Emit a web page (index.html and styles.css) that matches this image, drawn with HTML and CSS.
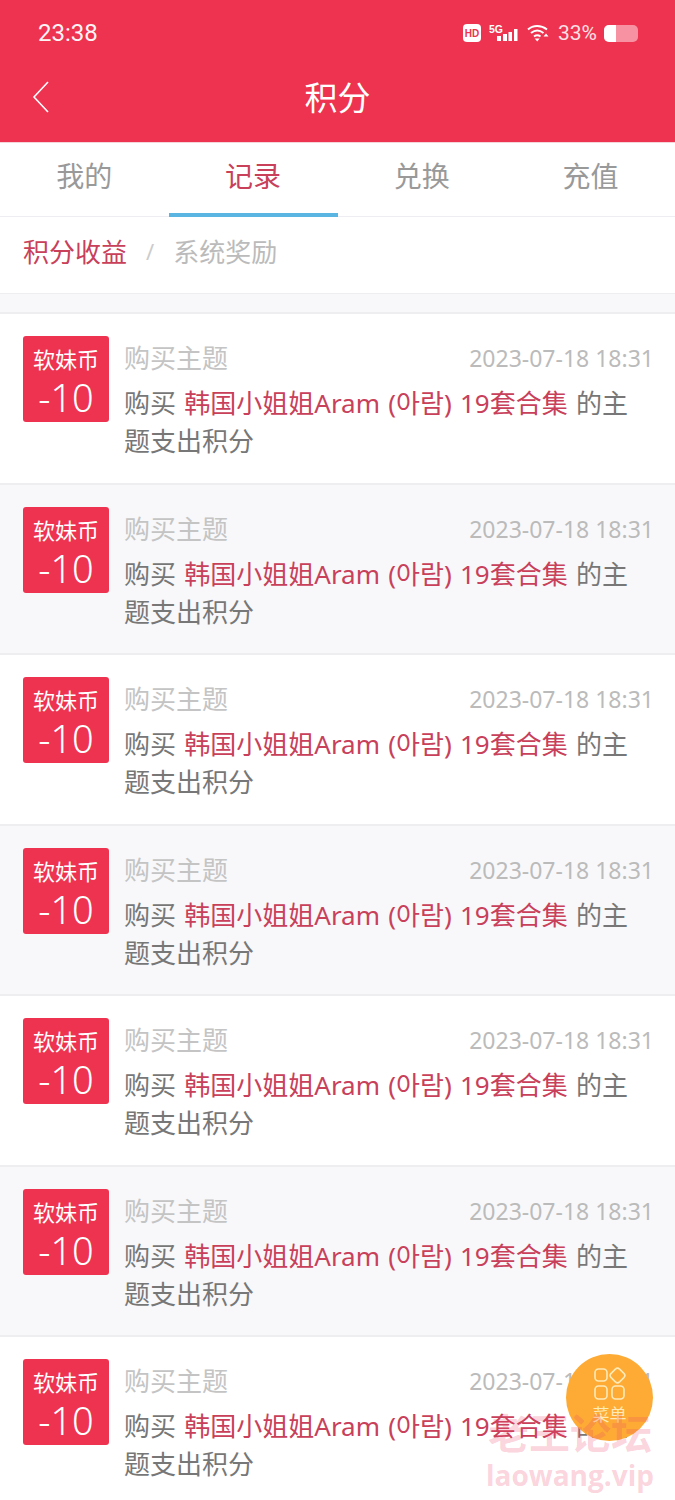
FILE: index.html
```html
<!DOCTYPE html>
<html lang="zh-CN">
<head>
  <meta charset="UTF-8" />
  <title>积分</title>
  <meta name="viewport" content="width=device-width, initial-scale=1.0" />
  <link rel="stylesheet" href="styles.css">
</head>
<body>

  <!-- Header -->
  <div class="header">
    <div class="statusbar">
      <span class="clock">23:38</span>
      <div class="status-icons">
        <svg class="icon-hd" width="18" height="18" viewBox="0 0 18 18">
          <rect width="18" height="18" rx="4" fill="#fff"/>
          <text x="9" y="13" text-anchor="middle" class="hd-text">HD</text>
        </svg>
        <svg class="icon-5g" width="29" height="18" viewBox="0 0 29 18">
          <text x="0" y="9" class="fiveg-text">5G</text>
          <rect x="8" y="12" width="4" height="5" fill="#fff"/>
          <rect x="14" y="10" width="4" height="7" fill="#fff"/>
          <rect x="19.500" y="8" width="3.500" height="9" fill="#fff"/>
          <rect x="25" y="5" width="3.500" height="12" fill="#fff"/>
        </svg>
        <svg class="icon-wifi" width="22" height="18" viewBox="0 0 22 18" fill="none" stroke="#fff" stroke-width="2">
          <path d="M1 5.500C6 .8 14 .8 20 5.500"/>
          <path d="M4 9C8 5.800 12.500 5.800 16.500 9"/>
          <path d="M7 12.500C9 11 11.500 11 13.500 12.500"/>
          <path d="M10.200 17.500l-2.500-3h5z" fill="#fff" stroke="none"/>
          <path d="M19 9.500l2.500 3h-5z" fill="#fff" stroke="none"/>
        </svg>
        <span class="battery-pct">33%</span>
        <div class="battery"><div class="battery-fill"></div></div>
      </div>
    </div>
    <div class="titlebar">
      <svg class="back" width="18" height="34" viewBox="0 0 18 34" fill="none" stroke="#fff" stroke-width="1.600">
        <path d="M16 2L2 17L16 32"/>
      </svg>
      <h1>积分</h1>
    </div>
  </div>

  <!-- Tabs -->
  <div class="tabs">
    <a class="tab">我的</a>
    <a class="tab active">记录</a>
    <a class="tab">兑换</a>
    <a class="tab">充值</a>
  </div>

  <div class="subnav">
    <span class="sub-on">积分收益</span>
    <span class="sub-sep">/</span>
    <span class="sub-off">系统奖励</span>
  </div>

  <!-- Records -->
  <div class="list">
    <div class="row">
      <div class="badge"><span class="badge-name">软妹币</span><span class="badge-num">-10</span></div>
      <div class="info">
        <div class="info-top"><span class="info-title">购买主题</span><span class="info-date">2023-07-18 18:31</span></div>
        <p class="info-text">购买 <span class="hl">韩国小姐姐Aram (아람) 19套合集</span> 的主题支出积分</p>
      </div>
    </div>
    <div class="row">
      <div class="badge"><span class="badge-name">软妹币</span><span class="badge-num">-10</span></div>
      <div class="info">
        <div class="info-top"><span class="info-title">购买主题</span><span class="info-date">2023-07-18 18:31</span></div>
        <p class="info-text">购买 <span class="hl">韩国小姐姐Aram (아람) 19套合集</span> 的主题支出积分</p>
      </div>
    </div>
    <div class="row">
      <div class="badge"><span class="badge-name">软妹币</span><span class="badge-num">-10</span></div>
      <div class="info">
        <div class="info-top"><span class="info-title">购买主题</span><span class="info-date">2023-07-18 18:31</span></div>
        <p class="info-text">购买 <span class="hl">韩国小姐姐Aram (아람) 19套合集</span> 的主题支出积分</p>
      </div>
    </div>
    <div class="row">
      <div class="badge"><span class="badge-name">软妹币</span><span class="badge-num">-10</span></div>
      <div class="info">
        <div class="info-top"><span class="info-title">购买主题</span><span class="info-date">2023-07-18 18:31</span></div>
        <p class="info-text">购买 <span class="hl">韩国小姐姐Aram (아람) 19套合集</span> 的主题支出积分</p>
      </div>
    </div>
    <div class="row">
      <div class="badge"><span class="badge-name">软妹币</span><span class="badge-num">-10</span></div>
      <div class="info">
        <div class="info-top"><span class="info-title">购买主题</span><span class="info-date">2023-07-18 18:31</span></div>
        <p class="info-text">购买 <span class="hl">韩国小姐姐Aram (아람) 19套合集</span> 的主题支出积分</p>
      </div>
    </div>
    <div class="row">
      <div class="badge"><span class="badge-name">软妹币</span><span class="badge-num">-10</span></div>
      <div class="info">
        <div class="info-top"><span class="info-title">购买主题</span><span class="info-date">2023-07-18 18:31</span></div>
        <p class="info-text">购买 <span class="hl">韩国小姐姐Aram (아람) 19套合集</span> 的主题支出积分</p>
      </div>
    </div>
    <div class="row">
      <div class="badge"><span class="badge-name">软妹币</span><span class="badge-num">-10</span></div>
      <div class="info">
        <div class="info-top"><span class="info-title">购买主题</span><span class="info-date">2023-07-18 18:31</span></div>
        <p class="info-text">购买 <span class="hl">韩国小姐姐Aram (아람) 19套合集</span> 的主题支出积分</p>
      </div>
    </div>
  </div>

  <!-- Floating menu -->
  <div class="fab">
    <svg width="34" height="34" viewBox="0 0 34 34" fill="none" stroke="#ffeab8" stroke-width="1.600">
      <rect x="2" y="2" width="12" height="12" rx="3.500"/>
      <rect x="18.500" y="2.500" width="12" height="12" rx="3" transform="rotate(45 24.500 8.500)"/>
      <rect x="2" y="19" width="12" height="13" rx="3.500"/>
      <rect x="19" y="19" width="12" height="13" rx="3.500"/>
    </svg>
    <span class="fab-label">菜单</span>
  </div>

  <!-- Watermark -->
  <div class="watermark">
    <span class="wm-cn">老王论坛</span>
    <span class="wm-en">laowang.vip</span>
  </div>

</body>
</html>
```
FILE: styles.css
```css
html, body {
  margin: 0;
  padding: 0;
  height: 1500px;
  overflow: hidden;
}

body {
  position: relative;
  width: 675px;
  background: #fff;
  font-family: "Noto Sans", "Noto Sans CJK SC", sans-serif;
  color: #777;
}

/* Header */
.header {
  height: 142px;
  background: #ee3350;
  color: #fff;
  border-bottom: 1px solid #f3d5da;
}

.statusbar {
  height: 66px;
  padding: 0 37px 0 38px;
  display: flex;
  justify-content: space-between;
  align-items: center;
}

.clock {
  font-family: Roboto, sans-serif;
  font-size: 24px;
  opacity: 0.95;
}

.status-icons {
  display: flex;
  align-items: center;
}

.hd-text {
  font: 700 10px "Liberation Sans", sans-serif;
  fill: #ee3350;
}

.fiveg-text {
  font: 700 10.500px "Liberation Sans", sans-serif;
  fill: #fff;
}

.icon-5g { margin-left: 8px; }
.icon-wifi { margin-left: 9px; }

.battery-pct {
  font-family: Roboto, sans-serif;
  font-size: 21px;
  margin-left: 9px;
  opacity: 0.85;
}

.battery {
  width: 34px;
  height: 17px;
  margin-left: 7px;
  border-radius: 5px;
  background: #f792a2;
  overflow: hidden;
}

.battery-fill {
  width: 12px;
  height: 100%;
  background: #fff;
}

.titlebar {
  position: relative;
  height: 64px;
  display: flex;
  justify-content: center;
  align-items: center;
}

.titlebar h1 {
  margin: 0 0 4px;
  font-size: 33px;
  font-weight: 400;
}

.back {
  position: absolute;
  left: 32px;
  top: 14px;
}

/* Tabs */
.tabs {
  height: 73px;
  display: flex;
  border-bottom: 1px solid #eeeef2;
}

.tab {
  flex: 1;
  display: flex;
  justify-content: center;
  align-items: center;
  padding-bottom: 6px;
  font-size: 28px;
  color: #999;
  border-bottom: 4px solid transparent;
  margin-bottom: -1px;
}

.tab.active {
  color: #c8405a;
  border-bottom-color: #5ab5e2;
}

.subnav {
  height: 76px;
  padding: 0 23px 9px;
  box-sizing: border-box;
  display: flex;
  align-items: center;
  font-size: 26px;
  background: #fff;
}

.sub-on { color: #c8405a; }
.sub-sep { margin: 0 19px; color: #ccc; font-size: 22px; }
.sub-off { color: #bbb; }

/* List */
.list {
  background: #f8f8fa;
  border-top: 1px solid #eeeef0;
  padding-top: 18px;
}

.row {
  height: 170.500px;
  box-sizing: border-box;
  padding: 22px 23px 0;
  display: flex;
  gap: 15px;
  background: #fff;
  border-top: 2px solid #eeeef0;
}

.row:nth-child(even) {
  background: #f8f8fa;
}

.badge {
  flex: none;
  width: 86px;
  height: 86px;
  border-radius: 3px;
  background: #ee3350;
  color: #fff;
  display: flex;
  flex-direction: column;
  align-items: center;
}

.badge-name {
  font-size: 22px;
  line-height: 30px;
  margin-top: 8px;
}

.badge-num {
  font-size: 38px;
  font-weight: 300;
  line-height: 40px;
  margin-top: 3px;
}

.info {
  flex: 1;
  min-width: 0;
}

.info-top {
  display: flex;
  justify-content: space-between;
  align-items: center;
  height: 44px;
}

.info-title {
  font-size: 26px;
  line-height: 38px;
  color: #c4c4c4;
}

.info-date {
  font-size: 23px;
  line-height: 38px;
  margin-right: -2px;
  color: #bbb;
}

.info-text {
  margin: 4px 0 0;
  font-size: 26px;
  line-height: 38px;
  word-spacing: 1.500px;
  color: #777;
}

.hl { color: #c8405a; }

/* Floating menu */
.fab {
  position: absolute;
  left: 566px;
  top: 1354px;
  width: 87px;
  height: 87px;
  border-radius: 50%;
  background: #fdab35;
  display: flex;
  flex-direction: column;
  align-items: center;
  padding-top: 13px;
  box-sizing: border-box;
}

.fab-label {
  font-size: 17px;
  color: #ffeab8;
  line-height: 24px;
  margin-top: 2px;
}

/* Watermark */
.watermark {
  position: absolute;
  right: 21px;
  top: 1408px;
  display: flex;
  flex-direction: column;
  align-items: center;
  color: rgba(238, 70, 105, 0.24);
  font-weight: 700;
  pointer-events: none;
}

.wm-cn {
  font-size: 41px;
  line-height: 50px;
}

.wm-en {
  font-size: 28px;
  line-height: 34px;
  font-family: "Open Sans", sans-serif;
}
```
